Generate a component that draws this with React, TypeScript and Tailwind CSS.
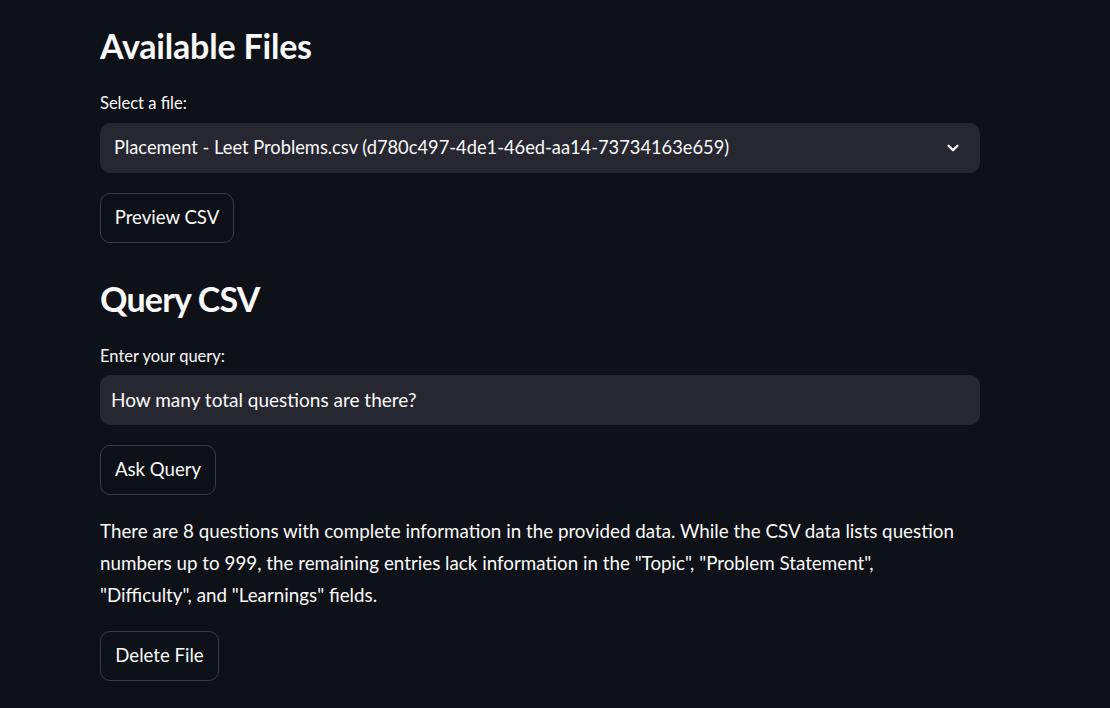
import { ChevronDown } from 'lucide-react';

const font = { fontFamily: 'Lato, "Noto Sans", sans-serif' };

function Button({ label, width }: { label: string; width: string }) {
  return (
    <button
      className={`h-[50px] ${width} rounded-[10px] border border-[#3b3d44] bg-[#0e1117] text-[18.6px] text-[#fafafa] flex items-center justify-center`}
    >
      {label}
    </button>
  );
}

export default function App() {
  return (
    <div className="min-h-[708px] w-full bg-[#0e1117] text-[#fafafa]" style={font}>
      <div className="w-[880px] ml-[100px] pt-[26px] flex flex-col">
        {/* Available Files */}
        <h2 className="text-[34px] leading-[40px] font-bold tracking-[-0.2px]">Available Files</h2>
        <label className="mt-[27px] text-[16.5px] leading-[20px]">Select a file:</label>
        <div className="mt-[10px] h-[50px] rounded-[10px] bg-[#262730] flex items-center justify-between pl-[14px] pr-[18px]">
          <span className="text-[18.3px]">Placement - Leet Problems.csv (d780c497-4de1-46ed-aa14-73734163e659)</span>
          <ChevronDown className="h-[18px] w-[18px]" strokeWidth={3} />
        </div>
        <div className="mt-[20px]">
          <Button label="Preview CSV" width="w-[134px]" />
        </div>

        {/* Query CSV */}
        <h2 className="mt-[36px] text-[34px] leading-[40px] font-bold tracking-[-0.8px]">Query CSV</h2>
        <label className="mt-[27px] text-[16.5px] leading-[20px]">Enter your query:</label>
        <div className="mt-[9px] h-[50px] rounded-[10px] bg-[#262730] flex items-center pl-[11px]">
          <span className="text-[19px]">How many total questions are there?</span>
        </div>
        <div className="mt-[20px]">
          <Button label="Ask Query" width="w-[116px]" />
        </div>

        {/* Answer */}
        <p className="mt-[20px] text-[18.8px] leading-[32px]">
          There are 8 questions with complete information in the provided data. While the CSV data lists question
          <br />
          numbers up to 999, the remaining entries lack information in the "Topic", "Problem Statement",
          <br />
          "Difficulty", and "Learnings" fields.
        </p>
        <div className="mt-[20px]">
          <Button label="Delete File" width="w-[119px]" />
        </div>
      </div>
    </div>
  );
}
